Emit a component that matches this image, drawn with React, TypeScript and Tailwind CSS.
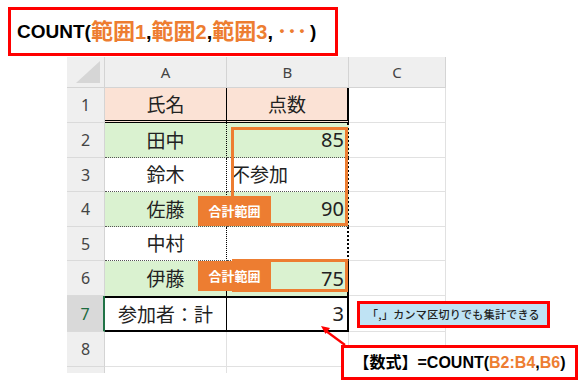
import React from "react";

const cellFont = { fontFamily: '"Noto Sans CJK JP", "Noto Sans", sans-serif' };

function RowHead({ n, active }: { n: string; active?: boolean }) {
  return (
    <div
      className={
        "flex items-center justify-center text-[16px] border-b border-b-[#dadada] " +
        (active
          ? "bg-[#d9d9d9] text-[#1d6b3e] border-r-2 border-r-[#217346]"
          : "bg-[#efefef] text-[#444] border-r border-r-[#d4d4d4]")
      }
      style={{ fontFamily: '"Noto Sans", sans-serif' }}
    >
      {n}
    </div>
  );
}

function Range({ d }: { d: string }) {
  return (
    <>
      <span className="text-[#ed7d31] text-[22px] leading-none">範囲</span>
      <span className="text-[#ed7d31] text-[20px] leading-none">{d}</span>
      <span className="text-[20px] leading-none">,</span>
    </>
  );
}

export default function App() {
  return (
    <div className="relative w-[587px] h-[386px] bg-white overflow-hidden">
      {/* Top formula box */}
      <div
        className="ml-[8px] mt-[7px] w-[330px] h-[49px] border-[3px] border-[#ff0000] flex items-center pl-[6px] font-bold text-black"
        style={{ fontFamily: '"Liberation Sans", "Noto Sans CJK JP", sans-serif' }}
      >
        <span className="text-[19px] leading-none">COUNT(</span>
        <Range d="1" />
        <Range d="2" />
        <Range d="3" />
        <span className="text-[#ed7d31] text-[20px] leading-none ml-[4px]">･･･</span>
        <span className="text-[19px] leading-none ml-[3px]">)</span>
      </div>

      {/* Spreadsheet */}
      <div
        className="ml-[67px] mt-[1px] grid grid-cols-[38px_122px_122px_97px] grid-rows-[31px_35px_35px_34px_35px_34px_35px_36px_35px_6px] text-[#222]"
        style={cellFont}
      >
        {/* header row */}
        <div className="bg-[#efefef] border-r border-r-[#d4d4d4] border-b border-b-[#d4d4d4] flex items-end justify-end pr-[3px] pb-[3px]">
          <svg width="25" height="23" viewBox="0 0 25 23">
            <polygon points="0,22 24,22 24,0" fill="#d6d6d6" />
          </svg>
        </div>
        {["A", "B", "C"].map((c) => (
          <div
            key={c}
            className="bg-[#efefef] border-r border-r-[#d4d4d4] border-b border-b-[#d4d4d4] flex items-center justify-center text-[15px] text-[#444]"
            style={{ fontFamily: '"Noto Sans", sans-serif' }}
          >
            {c}
          </div>
        ))}

        {/* row 1 */}
        <RowHead n="1" />
        <div className="bg-[#fbe2d5] border-r border-r-black border-b-[3px] border-double border-b-black flex items-center justify-center text-[19px]">
          氏名
        </div>
        <div className="bg-[#fbe2d5] border-r-2 border-r-black border-b-[3px] border-double border-b-black flex items-center justify-center text-[19px]">
          点数
        </div>
        <div className="border-r border-b border-[#e1e1e1]" />

        {/* row 2 */}
        <RowHead n="2" />
        <div className="bg-[#daf2d0] border-r border-r-black border-b border-dotted border-b-[#555] flex items-center justify-center text-[19px]">
          田中
        </div>
        <div className="bg-[#daf2d0] border-r-2 border-r-black border-b border-dotted border-b-[#555] flex items-center justify-end pr-[3px] text-[20px]" style={{ fontFamily: '"Noto Sans", sans-serif' }}>
          85
        </div>
        <div className="border-r border-b border-[#e1e1e1]" />

        {/* row 3 */}
        <RowHead n="3" />
        <div className="bg-white border-r border-r-black border-b border-dotted border-b-[#555] flex items-center justify-center text-[19px]">
          鈴木
        </div>
        <div className="bg-white border-r-2 border-r-black border-b border-dotted border-b-[#555] flex items-center justify-start pl-[4px] text-[19px]">
          不参加
        </div>
        <div className="border-r border-b border-[#e1e1e1]" />

        {/* row 4 */}
        <RowHead n="4" />
        <div className="bg-[#daf2d0] border-r border-r-black border-b border-dotted border-b-[#555] flex items-center justify-center text-[19px]">
          佐藤
        </div>
        <div className="bg-[#daf2d0] border-r-2 border-r-black border-b border-dotted border-b-[#555] flex items-center justify-end pr-[3px] text-[20px]" style={{ fontFamily: '"Noto Sans", sans-serif' }}>
          90
        </div>
        <div className="border-r border-b border-[#e1e1e1]" />

        {/* row 5 */}
        <RowHead n="5" />
        <div className="bg-white border-r border-r-black border-b border-dotted border-b-[#555] flex items-center justify-center text-[19px]">
          中村
        </div>
        <div className="bg-white border-r-2 border-r-black border-b border-dotted border-b-[#555]" />
        <div className="border-r border-b border-[#e1e1e1]" />

        {/* row 6 */}
        <RowHead n="6" />
        <div className="bg-[#daf2d0] border-r border-r-black flex items-center justify-center text-[19px]">
          伊藤
        </div>
        <div className="bg-[#daf2d0] border-r-2 border-r-black flex items-center justify-end pr-[3px] text-[20px]" style={{ fontFamily: '"Noto Sans", sans-serif' }}>
          75
        </div>
        <div className="border-r border-b border-[#e1e1e1]" />

        {/* row 7 */}
        <RowHead n="7" active />
        <div className="bg-white border-t-2 border-b-2 border-t-black border-b-black border-r border-r-black flex items-center justify-center text-[19px]">
          参加者：計
        </div>
        <div className="bg-white border-t-2 border-b-2 border-r-2 border-black flex items-center justify-end pr-[3px] text-[20px]" style={{ fontFamily: '"Noto Sans", sans-serif' }}>
          3
        </div>
        <div className="border-r border-b border-[#e1e1e1]" />

        {/* row 8 */}
        <RowHead n="8" />
        <div className="border-r border-b border-[#e1e1e1]" />
        <div className="border-r border-b border-[#e1e1e1]" />
        <div className="border-r border-b border-[#e1e1e1]" />

        {/* row 9 partial */}
        <div className="bg-[#efefef] border-r border-r-[#d4d4d4]" />
        <div className="border-r border-[#e1e1e1]" />
        <div className="border-r border-[#e1e1e1]" />
        <div className="border-r border-[#e1e1e1]" />
      </div>

      {/* Orange range boxes */}
      <div className="absolute left-[231px] top-[127px] w-[117px] h-[99px] border-[3px] border-[#ed7d31]" />
      <div className="absolute left-[232px] top-[259px] w-[116px] h-[33px] border-[3px] border-[#ed7d31]" />

      {/* 合計範囲 labels */}
      <div
        className="absolute left-[198px] top-[196px] w-[73px] h-[30px] bg-[#ed7d31] text-white font-bold text-[13px] flex items-center justify-center"
        style={cellFont}
      >
        合計範囲
      </div>
      <div
        className="absolute left-[198px] top-[261px] w-[73px] h-[30px] bg-[#ed7d31] text-white font-bold text-[13px] flex items-center justify-center"
        style={cellFont}
      >
        合計範囲
      </div>

      {/* Blue note */}
      <div
        className="absolute left-[357px] top-[301px] w-[193px] h-[27px] bg-[#bfe3f4] border-[3px] border-[#ff0000] flex items-center justify-center text-[11px] font-medium text-[#222] tracking-[0.3px]"
        style={cellFont}
      >
        「,」カンマ区切りでも集計できる
      </div>

      {/* Bottom formula */}
      <div
        className="absolute left-[341px] top-[345px] w-[237px] h-[35px] border-[3px] border-[#ff0000] bg-white flex items-center justify-center text-[16px] font-bold text-black"
        style={{ fontFamily: '"Liberation Sans", "Noto Sans CJK JP", sans-serif' }}
      >
        <span>【数式】=COUNT(</span>
        <span className="text-[#ed7d31]">B2:B4</span>
        <span>,</span>
        <span className="text-[#ed7d31]">B6</span>
        <span>)</span>
      </div>

      {/* Arrow */}
      <svg className="absolute left-0 top-0 pointer-events-none" width="587" height="386">
        <line x1="345" y1="345" x2="326" y2="331" stroke="#ff0000" strokeWidth="2.2" />
        <polygon points="321,326 330,328 325.5,334" fill="#ff0000" />
      </svg>
    </div>
  );
}
